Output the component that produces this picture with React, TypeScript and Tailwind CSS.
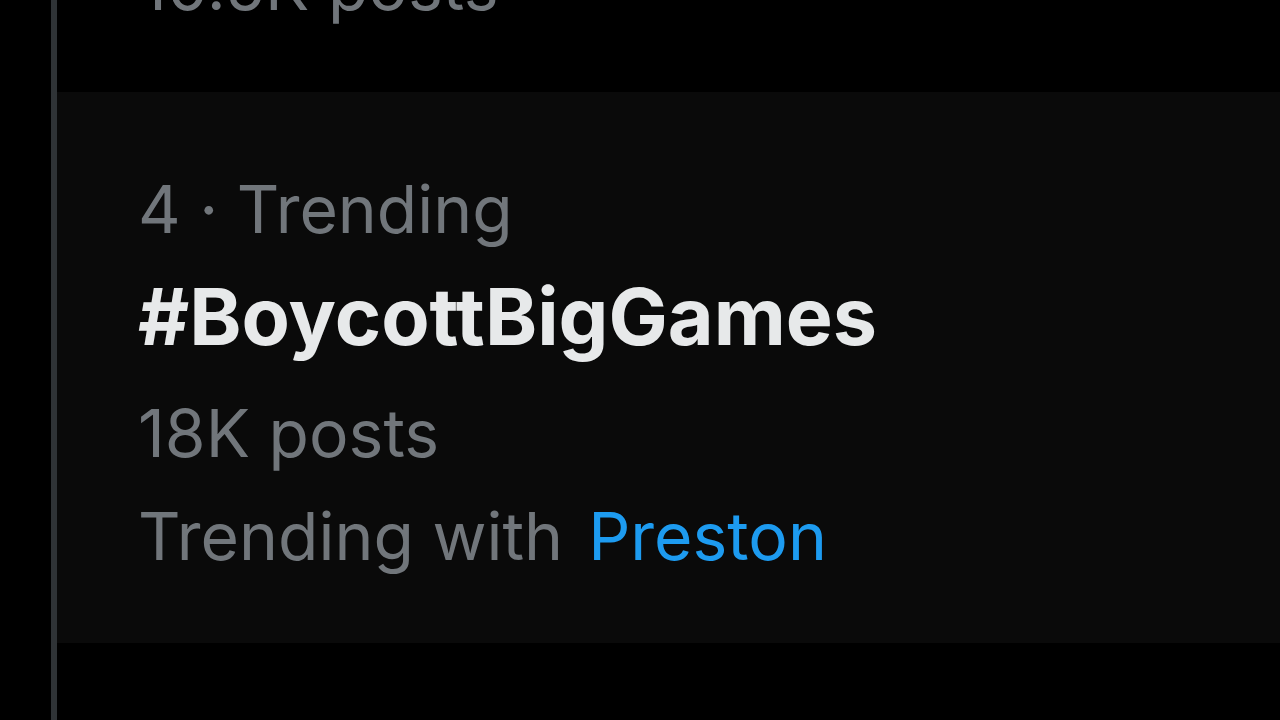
export default function App() {
  return (
    <div className="w-[1280px] h-[720px] bg-black overflow-hidden flex font-['Inter','Liberation_Sans',sans-serif]">
      <div className="w-[51px] shrink-0" />
      <div className="w-[6px] shrink-0 bg-[#2f3336]" />
      <div className="flex-1 flex flex-col">
        <div className="h-[92px] pl-[83px] overflow-hidden">
          <div className="mt-[-47px] text-[66px] leading-[66px] text-[#71767b]">10.5K posts</div>
        </div>
        <div className="bg-[#0a0a0a] pl-[81px] pt-[75px] pb-[56px] flex flex-col">
          <div className="text-[66px] leading-[84px] text-[#71767b]">4 · Trending</div>
          <div className="text-[79px] leading-[130px] font-bold text-[#e7e9ea]">#BoycottBigGames</div>
          <div className="text-[66px] leading-[104px] text-[#71767b]">18K posts</div>
          <div className="flex gap-[25px] text-[66px] leading-[102px]">
            <span className="text-[#71767b]">Trending with</span>
            <span className="text-[#1d9bf0]">Preston</span>
          </div>
        </div>
      </div>
    </div>
  );
}
